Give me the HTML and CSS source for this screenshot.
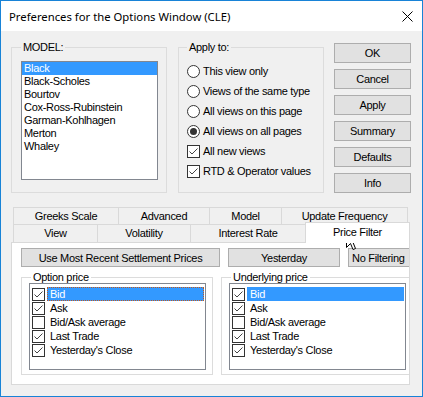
FILE: index.html
```html
<!DOCTYPE html>
<html lang="en">
<head>
  <meta charset="UTF-8" />
  <title>Preferences for the Options Window (CLE)</title>
  <link rel="stylesheet" href="styles.css">
</head>
<body>

  <div class="window">
    <div class="titlebar">
      <span class="title">Preferences for the Options Window (CLE)</span>
      <svg class="close" width="11" height="11" viewBox="0 0 11 11">
        <path d="M0.5 0.5 L10.5 10.5 M10.5 0.5 L0.5 10.5" stroke="#000" stroke-width="1" fill="none"/>
      </svg>
    </div>

    <div class="top">
      <fieldset class="group model">
        <legend>MODEL:</legend>
        <ul class="listbox models">
          <li class="sel">Black</li>
          <li>Black-Scholes</li>
          <li>Bourtov</li>
          <li>Cox-Ross-Rubinstein</li>
          <li>Garman-Kohlhagen</li>
          <li>Merton</li>
          <li>Whaley</li>
        </ul>
      </fieldset>

      <fieldset class="group apply">
        <legend>Apply to:</legend>
        <div class="opt"><span class="radio"></span>This view only</div>
        <div class="opt"><span class="radio"></span>Views of the same type</div>
        <div class="opt"><span class="radio"></span>All views on this page</div>
        <div class="opt"><span class="radio on"></span>All views on all pages</div>
        <div class="opt"><span class="check on"></span>All new views</div>
        <div class="opt"><span class="check on"></span>RTD &amp; Operator values</div>
      </fieldset>

      <div class="buttons">
        <button>OK</button>
        <button>Cancel</button>
        <button>Apply</button>
        <button>Summary</button>
        <button>Defaults</button>
        <button>Info</button>
      </div>
    </div>

    <div class="tabs">
      <div class="tab-row">
        <div class="tab w-greeks">Greeks Scale</div>
        <div class="tab w-advanced">Advanced</div>
        <div class="tab w-model">Model</div>
        <div class="tab w-update">Update Frequency</div>
      </div>
      <div class="tab-row front">
        <div class="tab w-view">View</div>
        <div class="tab w-vol">Volatility</div>
        <div class="tab w-rate">Interest Rate</div>
        <div class="tab w-filter active">Price Filter</div>
      </div>

      <div class="panel">
        <div class="filter-buttons">
          <button class="b-recent">Use Most Recent Settlement Prices</button>
          <button class="b-yesterday">Yesterday</button>
          <button class="b-none">No Filtering</button>
        </div>

        <div class="price-groups">
          <fieldset class="group price">
            <legend>Option price</legend>
            <div class="listbox checklist">
              <div class="item sel focus"><span class="check on"></span><span class="txt">Bid</span></div>
              <div class="item"><span class="check on"></span><span class="txt">Ask</span></div>
              <div class="item"><span class="check"></span><span class="txt">Bid/Ask average</span></div>
              <div class="item"><span class="check on"></span><span class="txt">Last Trade</span></div>
              <div class="item"><span class="check on"></span><span class="txt">Yesterday's Close</span></div>
            </div>
          </fieldset>

          <fieldset class="group price">
            <legend>Underlying price</legend>
            <div class="listbox checklist">
              <div class="item sel"><span class="check on"></span><span class="txt">Bid</span></div>
              <div class="item"><span class="check on"></span><span class="txt">Ask</span></div>
              <div class="item"><span class="check"></span><span class="txt">Bid/Ask average</span></div>
              <div class="item"><span class="check on"></span><span class="txt">Last Trade</span></div>
              <div class="item"><span class="check on"></span><span class="txt">Yesterday's Close</span></div>
            </div>
          </fieldset>
        </div>
      </div>
    </div>

    <!-- mouse pointer over the Price Filter tab -->
    <svg class="cursor" width="13" height="20" viewBox="0 0 13 20">
      <path d="M0.5 0.5 L0.5 16.5 L4.5 12.5 L7 18.5 L9.5 17.5 L7 11.5 L12 11.5 Z" fill="#fff" stroke="#000" stroke-width="1"/>
    </svg>
  </div>

</body>
</html>
```

FILE: styles.css
```css
* {
  box-sizing: border-box;
}

body {
  margin: 0;
  font-family: 'Liberation Sans', Arial, sans-serif;
  font-size: 11px;
  letter-spacing: -0.3px;
  color: #000;
}

.window {
  position: relative;
  width: 423px;
  height: 397px;
  border: 1px solid #1883d7;
  background: #f0f0f0;
  overflow: hidden;
}

.titlebar {
  height: 30px;
  background: #fff;
  display: flex;
  align-items: center;
  justify-content: space-between;
  padding: 0 9px 0 8px;
}

.title {
  font-family: 'Noto Sans', 'Open Sans', sans-serif;
  font-size: 11.3px;
  letter-spacing: 0;
}

/* group boxes */
.group {
  margin: 0;
  border: 1px solid #dcdcdc;
  min-width: 0;
  flex-shrink: 0;
}

.group legend {
  padding: 0 2px;
  line-height: 13px;
}

.top {
  display: flex;
  align-items: flex-start;
  padding: 10px 0 0 10px;
}

.model {
  width: 156px;
  height: 152px;
  padding: 7px 0 0 9px;
}

.apply {
  width: 146px;
  height: 152px;
  margin-left: 11px;
  padding: 7px 0 0 8px;
}

.listbox {
  background: #fff;
  border: 1px solid #828790;
  list-style: none;
  margin: 0;
  padding: 0;
}

.models {
  width: 137px;
  height: 119px;
}

.models li {
  line-height: 13px;
  padding-left: 2px;
}

.sel {
  background: #3399ff;
  color: #fff;
}

.opt {
  height: 20px;
  display: flex;
  align-items: center;
  gap: 3px;
}

.radio {
  width: 13px;
  height: 13px;
  border: 1px solid #333;
  border-radius: 50%;
  background: #fff;
  display: flex;
  align-items: center;
  justify-content: center;
}

.radio.on::after {
  content: "";
  width: 7px;
  height: 7px;
  border-radius: 50%;
  background: #333;
}

.check {
  width: 13px;
  height: 13px;
  border: 1px solid #333;
  background: #fff;
  flex-shrink: 0;
}

.check.on {
  background: #fff url("data:image/svg+xml;utf8,<svg xmlns='http://www.w3.org/2000/svg' width='11' height='11'><path d='M1.5 5.5 L4 8 L9.5 2.5' stroke='%23444' stroke-width='1' fill='none'/></svg>") no-repeat center;
}

button {
  font: inherit;
  letter-spacing: inherit;
  color: #000;
  background: #e1e1e1;
  border: 1px solid #adadad;
  padding: 0;
  flex-shrink: 0;
}

.buttons {
  display: flex;
  flex-direction: column;
  gap: 6px;
  width: 77px;
  margin: 2px 0 0 10px;
}

.buttons button {
  height: 20px;
}

/* tabs */
.tabs {
  margin: 14px 0 0 10px;
}

.tab-row {
  display: flex;
  margin-left: 2px;
}

.tab {
  height: 17px;
  line-height: 16px;
  text-align: center;
  border: 1px solid #d9d9d9;
  border-bottom: none;
  margin-left: -1px;
  background: #f0f0f0;
  white-space: nowrap;
}

.tab:first-child {
  margin-left: 0;
}

.front .tab {
  height: 18px;
  line-height: 17px;
}

.front .tab.active {
  position: relative;
  z-index: 1;
  height: 21px;
  line-height: 18px;
  margin-top: -2px;
  margin-bottom: -1px;
  background: #fff;
}

.w-greeks { width: 106px; }
.w-advanced { width: 92px; }
.w-model { width: 73px; }
.w-update { width: 127px; }
.w-view { width: 85px; }
.w-vol { width: 94px; }
.w-rate { width: 116px; }
.w-filter { width: 105px; }

.panel {
  width: 399px;
  height: 143px;
  border: 1px solid #d9d9d9;
  background: #fff;
  padding: 5px 0 0 9px;
  overflow: hidden;
}

.filter-buttons {
  display: flex;
  gap: 8px;
}

.filter-buttons button {
  height: 19px;
}

.b-recent { width: 199px; }
.b-yesterday { width: 112px; }
.b-none { width: 80px; text-align: left; padding-left: 3px; }

.price-groups {
  display: flex;
  gap: 8px;
  margin-top: 4px;
}

.price {
  width: 192px;
  height: 104px;
  padding: 0 0 0 7px;
}

.price legend {
  margin-left: 2px;
  line-height: 12px;
}

.checklist {
  width: 177px;
  height: 87px;
  padding: 3px 0 0 2px;
}

.item {
  display: flex;
  align-items: center;
  height: 14px;
}

.item .check {
  margin-right: 2px;
}

.item .txt {
  flex: 1;
  line-height: 14px;
  padding-left: 3px;
  margin-right: 1px;
}

.item.sel {
  background: none;
}

.item.sel .txt {
  background: #3399ff;
  color: #fff;
}

.item.focus .txt {
  outline: 1px dotted #c05a20;
  outline-offset: -1px;
}

.cursor {
  position: absolute;
  left: 345px;
  top: 230px;
}
```
